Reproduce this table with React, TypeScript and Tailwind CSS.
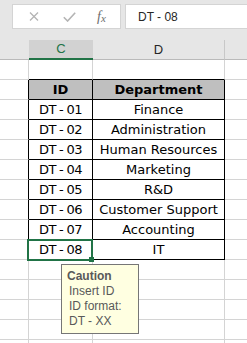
import React from 'react';

const rows: [string, string][] = [
  ['DT - 01', 'Finance'],
  ['DT - 02', 'Administration'],
  ['DT - 03', 'Human Resources'],
  ['DT - 04', 'Marketing'],
  ['DT - 05', 'R&D'],
  ['DT - 06', 'Customer Support'],
  ['DT - 07', 'Accounting'],
  ['DT - 08', 'IT'],
];

const cellFont = "font-['DejaVu_Sans',sans-serif] text-[13px] text-black";

const EmptyRow = ({ topOfTable = false }: { topOfTable?: boolean }) => (
  <div className="flex h-[20px]">
    <div className="w-[29px] shrink-0 border-r border-b border-[#d4d4d4]" />
    <div
      className={`w-[64px] shrink-0 border-r border-[#d4d4d4] border-b ${
        topOfTable ? 'border-b-black' : ''
      }`}
    />
    <div
      className={`w-[132px] shrink-0 border-r border-[#d4d4d4] border-b ${
        topOfTable ? 'border-b-black' : ''
      }`}
    />
    <div className="flex-1 border-b border-[#d4d4d4]" />
  </div>
);

const TableRow = ({ id, dept, head = false }: { id: string; dept: string; head?: boolean }) => (
  <div className="flex h-[20px]">
    <div className="w-[29px] shrink-0 border-r border-b border-[#d4d4d4] border-r-black" />
    <div
      className={`w-[64px] shrink-0 border-r border-b border-black text-center pt-[1px] leading-[18px] whitespace-nowrap ${cellFont} ${
        head ? 'bg-[#bfbfbf] font-bold' : 'tracking-[-0.5px] [word-spacing:-0.5px]'
      }`}
    >
      {id}
    </div>
    <div
      className={`w-[132px] shrink-0 border-r border-b border-black text-center pt-[1px] leading-[18px] whitespace-nowrap ${cellFont} ${
        head ? 'bg-[#bfbfbf] font-bold' : ''
      }`}
    >
      {dept}
    </div>
    <div className="flex-1 border-b border-[#d4d4d4]" />
  </div>
);

export default function App() {
  return (
    <div className="relative w-[247px] h-[343px] overflow-hidden bg-white">
      {/* Formula bar */}
      <div className="bg-[#e6e6e6] h-[40px] pt-[4px] pl-[12px] flex gap-[4px]">
        <div className="w-[109px] h-[25px] bg-white border border-[#d4d4d4] flex items-center">
          <div className="w-[40px] flex justify-center pl-[1px]">
            <svg width="10" height="9" viewBox="0 0 10 9">
              <path d="M1 0.5 L9 8.5 M9 0.5 L1 8.5" stroke="#b4b4b4" strokeWidth="1.3" fill="none" />
            </svg>
          </div>
          <div className="w-[32px] flex justify-center">
            <svg width="13" height="10" viewBox="0 0 13 10">
              <path d="M0.8 5.2 L4.6 9 L12.2 0.8" stroke="#b4b4b4" strokeWidth="1.6" fill="none" />
            </svg>
          </div>
          <div className="flex-1 flex justify-center pr-[2px] font-['Liberation_Serif',serif] italic text-[14px] text-[#6d6d6d] leading-none">
            f<span className="text-[11px] mt-[3px]">x</span>
          </div>
        </div>
        <div className="flex-1 h-[25px] bg-white border border-[#d4d4d4] border-r-0 flex items-center pl-[12px] font-['Liberation_Sans',sans-serif] text-[12px] text-[#262626]">
          DT - 08
        </div>
      </div>

      {/* Column headers */}
      <div className="flex h-[20px] bg-[#e6e6e6] font-['Liberation_Sans',sans-serif] text-[13px]">
        <div className="w-[29px] shrink-0 border-b border-[#bababa]" />
        <div className="w-[64px] shrink-0 bg-[#d2d2d2] border-b-2 border-[#217346] text-[#217346] flex items-center justify-center">
          C
        </div>
        <div className="w-[132px] shrink-0 border-b border-r border-[#bababa] border-r-[#c8c8c8] flex items-center justify-center text-[#262626]">
          D
        </div>
        <div className="flex-1 border-b border-[#bababa]" />
      </div>

      {/* Grid */}
      <div className="flex flex-col">
        <EmptyRow topOfTable />
        <TableRow id="ID" dept="Department" head />
        {rows.map(([id, dept]) => (
          <TableRow key={id} id={id} dept={dept} />
        ))}
        <EmptyRow />
        <EmptyRow />
        <EmptyRow />
        <EmptyRow />
        <EmptyRow />
      </div>

      {/* Active cell */}
      <div className="absolute left-[27px] top-[239px] w-[66px] h-[22px] border-2 border-[#217346]" />
      <div className="absolute left-[89px] top-[257px] w-[5px] h-[5px] bg-[#217346]" />

      {/* Input message */}
      <div className="absolute left-[61px] top-[264px] w-[78px] h-[70px] bg-[#ffffe1] border border-[#767676] pt-[4px] pl-[5px] font-['Liberation_Sans',sans-serif] text-[12px] leading-[15px] text-[#595959] whitespace-nowrap">
        <div className="font-bold">Caution</div>
        <div className="ml-[2px]">Insert ID</div>
        <div className="ml-[2px]">ID format:</div>
        <div className="ml-[2px]">DT - XX</div>
      </div>
    </div>
  );
}
